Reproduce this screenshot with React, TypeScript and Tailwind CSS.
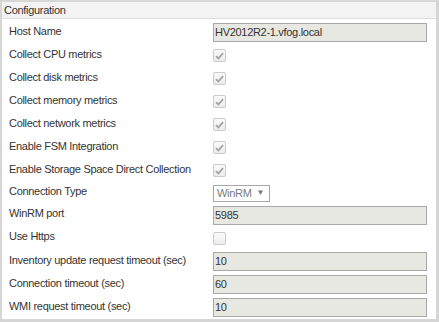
import React from 'react';

type Row =
    | { label: string; kind: 'text'; value: string; h: string }
    | { label: string; kind: 'check'; checked: boolean; h: string }
    | { label: string; kind: 'select'; value: string; h: string };

const rows: Row[] = [
    { label: 'Host Name', kind: 'text', value: 'HV2012R2-1.vfog.local', h: 'h-[23px]' },
    { label: 'Collect CPU metrics', kind: 'check', checked: true, h: 'h-[23px]' },
    { label: 'Collect disk metrics', kind: 'check', checked: true, h: 'h-[23px]' },
    { label: 'Collect memory metrics', kind: 'check', checked: true, h: 'h-[23px]' },
    { label: 'Collect network metrics', kind: 'check', checked: true, h: 'h-[23px]' },
    { label: 'Enable FSM Integration', kind: 'check', checked: true, h: 'h-[23px]' },
    { label: 'Enable Storage Space Direct Collection', kind: 'check', checked: true, h: 'h-[23px]' },
    { label: 'Connection Type', kind: 'select', value: 'WinRM', h: 'h-[22px]' },
    { label: 'WinRM port', kind: 'text', value: '5985', h: 'h-[22px]' },
    { label: 'Use Https', kind: 'check', checked: false, h: 'h-[24px]' },
    { label: 'Inventory update request timeout (sec)', kind: 'text', value: '10', h: 'h-[23px]' },
    { label: 'Connection timeout (sec)', kind: 'text', value: '60', h: 'h-[23px]' },
    { label: 'WMI request timeout (sec)', kind: 'text', value: '10', h: 'h-[23px]' },
];

function CheckBox({ checked }: { checked: boolean }) {
    return (
        <div className="w-[13px] h-[13px] rounded-[2px] border border-[#cbcbcb] bg-gradient-to-b from-[#fafafa] to-[#ececec] flex items-center justify-center">
            {checked && (
                <svg width="9" height="8" viewBox="0 0 9 8">
                    <path d="M1 4.2 L3.4 6.5 L8 1.2" stroke="#a3a3a3" strokeWidth="1.8" fill="none" />
                </svg>
            )}
        </div>
    );
}

function Control({ row }: { row: Row }) {
    if (row.kind === 'text') {
        return (
            <div className="w-[214px] h-[19px] border border-[#a8a8a8] bg-[#e8e8e3] pl-[1px] flex items-center text-[#333] leading-none">
                {row.value}
            </div>
        );
    }
    if (row.kind === 'select') {
        return (
            <div className="w-[57px] h-[17px] border border-[#a8a8a8] bg-white pl-[3px] pr-[5px] flex items-center justify-between text-[#7a7a7a] leading-none">
                <span>{row.value}</span>
                <span className="text-[8px] text-[#777]">▼</span>
            </div>
        );
    }
    return <CheckBox checked={row.checked} />;
}

export default function App() {
    return (
        <div
            className="w-[439px] h-[322px] bg-[#d6d6d6] pt-[2px] pl-[2px] pr-[3px] pb-[3px] text-[11px] tracking-[-0.3px] text-[#333]"
            style={{ fontFamily: '"Liberation Sans", Arial, sans-serif' }}
        >
            <div className="w-full h-full bg-white flex flex-col">
                <div className="h-[18px] bg-[#f3f3f3] border-b border-[#dedede] pl-[2px] flex items-center leading-none">
                    Configuration
                </div>
                <div className="pt-[2px] flex flex-col">
                    {rows.map((row) => (
                        <div key={row.label} className={`${row.h} flex items-center`}>
                            <div className="w-[211px] pl-[7px] mb-[3px] leading-none">{row.label}</div>
                            <Control row={row} />
                        </div>
                    ))}
                </div>
            </div>
        </div>
    );
}
